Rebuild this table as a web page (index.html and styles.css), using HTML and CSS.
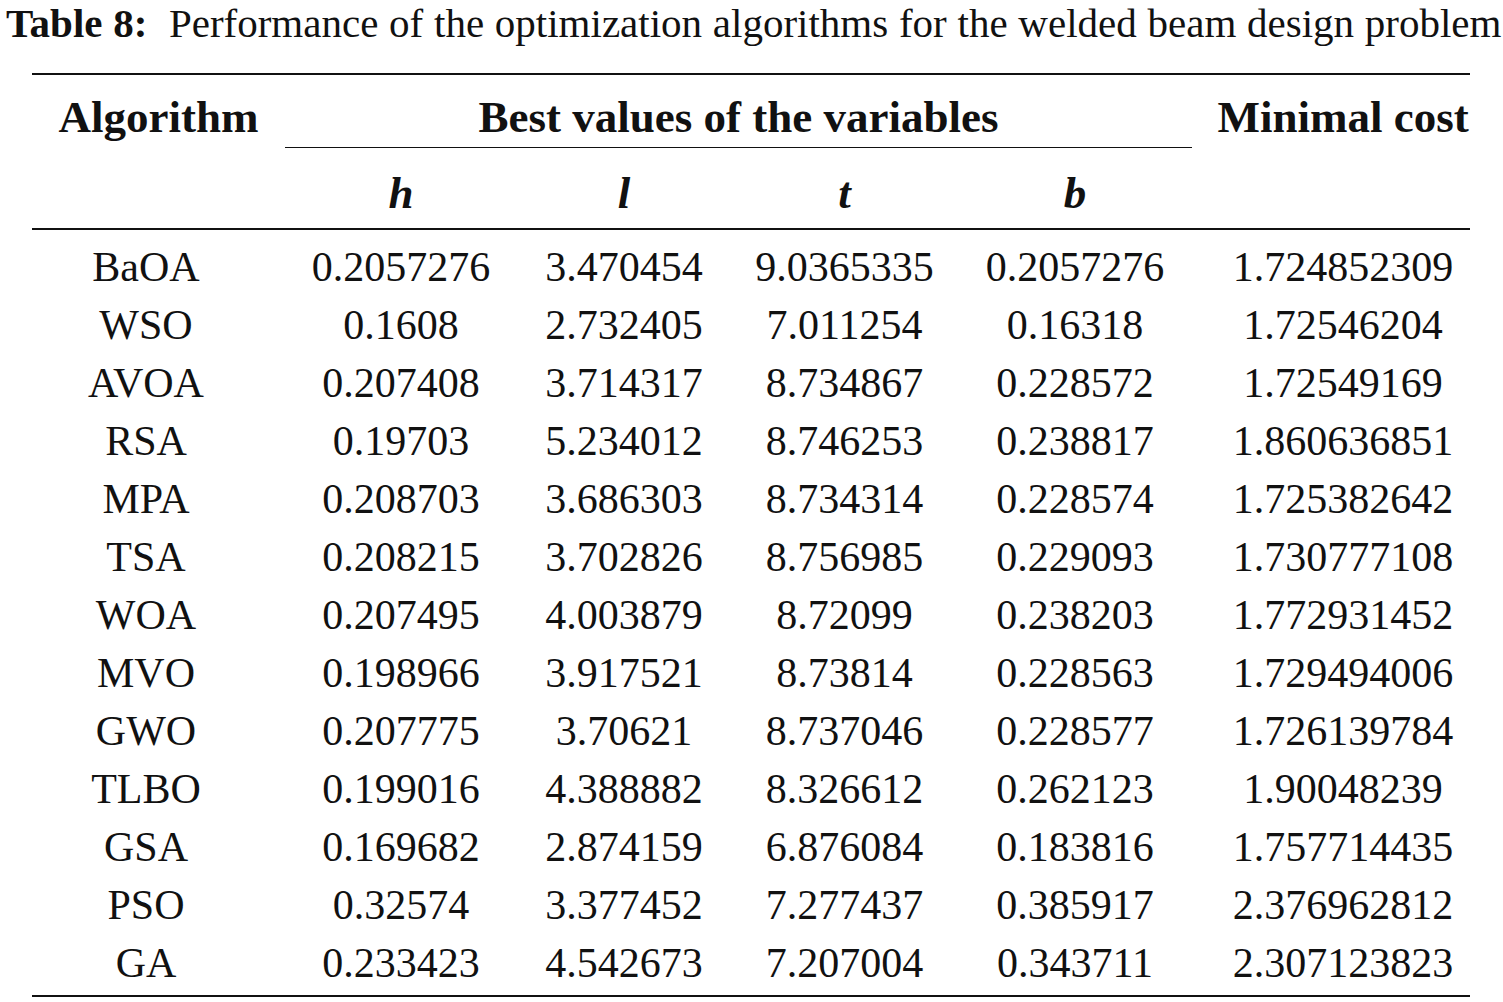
FILE: index.html
```html
<!DOCTYPE html>
<html>
<head>
<meta charset="utf-8">
<link rel="stylesheet" href="styles.css">
<title>Table 8</title>
</head>
<body>
<div class="page">
  <p class="caption"><span class="cap-label">Table 8:</span>&nbsp; Performance of the optimization algorithms for the welded beam design problem</p>
  <table class="tbl">
    <colgroup>
      <col class="c-alg"><col class="c-h"><col class="c-l"><col class="c-t"><col class="c-b"><col class="c-cost">
    </colgroup>
    <thead>
      <tr class="hr1">
        <th class="alg" rowspan="2">Algorithm</th>
        <th class="group" colspan="4">Best values of the variables</th>
        <th class="cost" rowspan="2">Minimal cost</th>
      </tr>
      <tr class="hr2">
        <th class="var">h</th><th class="var">l</th><th class="var">t</th><th class="var">b</th>
      </tr>
    </thead>
    <tbody>
      <tr class="first"><td class="alg">BaOA</td><td>0.2057276</td><td>3.470454</td><td>9.0365335</td><td>0.2057276</td><td class="cost">1.724852309</td></tr>
      <tr><td class="alg">WSO</td><td>0.1608</td><td>2.732405</td><td>7.011254</td><td>0.16318</td><td class="cost">1.72546204</td></tr>
      <tr><td class="alg">AVOA</td><td>0.207408</td><td>3.714317</td><td>8.734867</td><td>0.228572</td><td class="cost">1.72549169</td></tr>
      <tr><td class="alg">RSA</td><td>0.19703</td><td>5.234012</td><td>8.746253</td><td>0.238817</td><td class="cost">1.860636851</td></tr>
      <tr><td class="alg">MPA</td><td>0.208703</td><td>3.686303</td><td>8.734314</td><td>0.228574</td><td class="cost">1.725382642</td></tr>
      <tr><td class="alg">TSA</td><td>0.208215</td><td>3.702826</td><td>8.756985</td><td>0.229093</td><td class="cost">1.730777108</td></tr>
      <tr><td class="alg">WOA</td><td>0.207495</td><td>4.003879</td><td>8.72099</td><td>0.238203</td><td class="cost">1.772931452</td></tr>
      <tr><td class="alg">MVO</td><td>0.198966</td><td>3.917521</td><td>8.73814</td><td>0.228563</td><td class="cost">1.729494006</td></tr>
      <tr><td class="alg">GWO</td><td>0.207775</td><td>3.70621</td><td>8.737046</td><td>0.228577</td><td class="cost">1.726139784</td></tr>
      <tr><td class="alg">TLBO</td><td>0.199016</td><td>4.388882</td><td>8.326612</td><td>0.262123</td><td class="cost">1.90048239</td></tr>
      <tr><td class="alg">GSA</td><td>0.169682</td><td>2.874159</td><td>6.876084</td><td>0.183816</td><td class="cost">1.757714435</td></tr>
      <tr><td class="alg">PSO</td><td>0.32574</td><td>3.377452</td><td>7.277437</td><td>0.385917</td><td class="cost">2.376962812</td></tr>
      <tr class="last"><td class="alg">GA</td><td>0.233423</td><td>4.542673</td><td>7.207004</td><td>0.343711</td><td class="cost">2.307123823</td></tr>
    </tbody>
  </table>
</div>
</body>
</html>
```
FILE: styles.css
```css
html, body {
  margin: 0;
  padding: 0;
  background: #ffffff;
}
body {
  font-family: "Liberation Serif", "Times New Roman", serif;
  color: #111111;
}
.page {
  width: 1503px;
  height: 1002px;
  overflow: hidden;
}
.caption {
  margin: 0;
  padding: 0 0 0 6px;
  height: 73px;
  box-sizing: border-box;
  font-size: 41px;
  line-height: 46px;
  word-spacing: 0.5px;
  white-space: nowrap;
}
.cap-label {
  font-weight: bold;
}
.tbl {
  margin-left: 32px;
  width: 1438px;
  table-layout: fixed;
  border-collapse: separate;
  border-spacing: 0;
  border-top: 2.5px solid #111111;
  border-bottom: 2.5px solid #111111;
}
.c-alg { width: 253px; }
.c-h { width: 232px; }
.c-l { width: 214px; }
.c-t { width: 227px; }
.c-b { width: 234px; }
.c-cost { width: 278px; }

th, td {
  padding: 0;
  text-align: center;
  white-space: nowrap;
}
th {
  font-weight: bold;
  font-size: 45px;
}
th.alg {
  vertical-align: top;
  padding-top: 17px;
  line-height: 50px;
  border-bottom: 2.5px solid #111111;
}
th.cost {
  padding-left: 24px;
  vertical-align: top;
  padding-top: 17px;
  line-height: 50px;
  border-bottom: 2.5px solid #111111;
}
.hr1 th.group {
  height: 73px;
  box-sizing: border-box;
  padding-top: 17px;
  vertical-align: top;
  line-height: 50px;
  border-bottom: 1.5px solid #111111;
}
.hr2 th.var {
  height: 70px;
  font-style: italic;
  line-height: 50px;
  vertical-align: middle;
  padding-top: 10px;
  border-bottom: 2.5px solid #111111;
}
td {
  font-size: 42px;
  height: 58px;
  line-height: 58px;
}
td.alg {
  padding-right: 25px;
}
td.cost {
  padding-left: 24px;
}
tr.first td {
  padding-top: 8px;
}
tr.last td {
  padding-bottom: 3px;
}
```
